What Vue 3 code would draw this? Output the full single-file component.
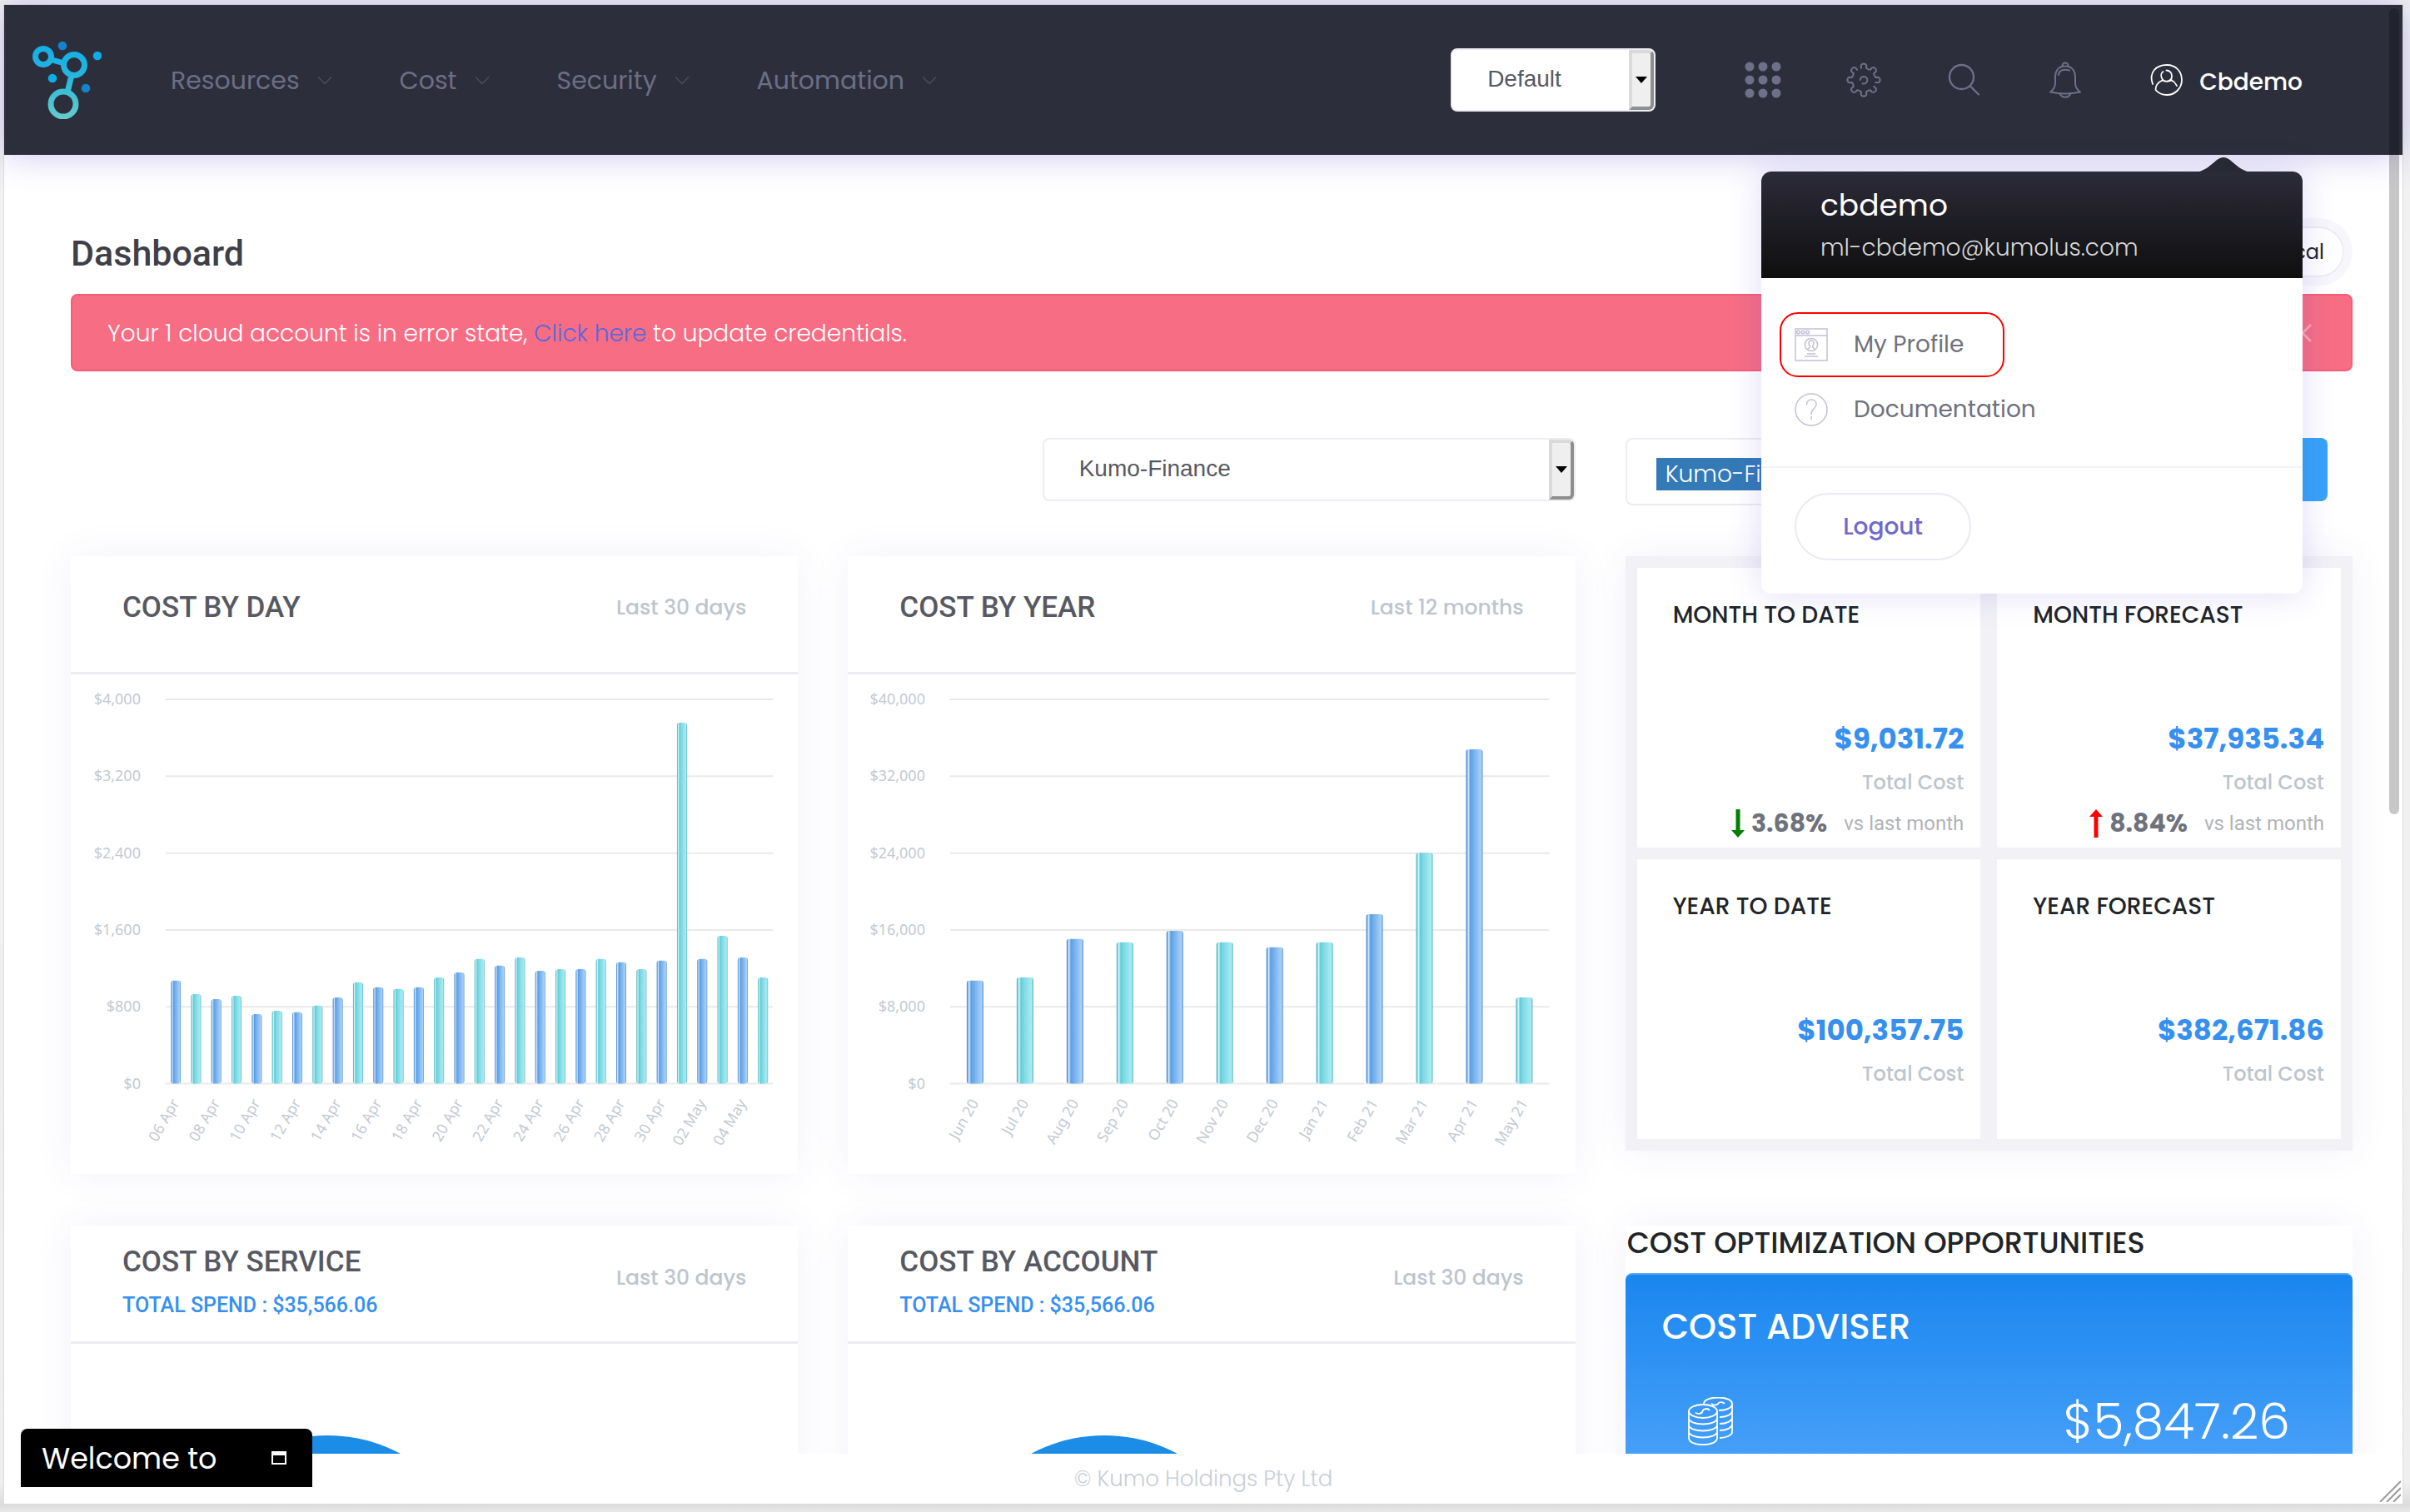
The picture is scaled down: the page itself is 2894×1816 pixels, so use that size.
<script setup>
const navItems = ['Resources', 'Cost', 'Security', 'Automation']

const PLOT_TOP = 30
const PLOT_BASE = 492
const PLOT_HEIGHT = PLOT_BASE - PLOT_TOP

function toothed(from, to) {
  const point = (r, deg) => {
    const a = (deg * Math.PI) / 180
    return `${(22 + r * Math.cos(a)).toFixed(2)} ${(22 + r * Math.sin(a)).toFixed(2)}`
  }
  let d = ''
  for (let deg = from; deg <= to; deg += 45) {
    d += deg === from ? `M${point(14.5, deg - 12)}` : `Q${point(13.4, deg - 22.5)} ${point(14.5, deg - 12)}`
    d += `L${point(17.6, deg - 11)}A3.6 3.6 0 0 1 ${point(17.6, deg + 11)}L${point(14.5, deg + 12)}`
  }
  return d
}
const gearPath = toothed(-90, 0) + toothed(45, 225)

function buildChart({ title, period, left, right, max, barWidth, labels, values, ticks }) {
  const step = (right - left) / values.length
  const bars = values.map((value, i) => {
    const height = (value / max) * PLOT_HEIGHT
    return {
      x: left + step * (i + 0.5) - barWidth / 2,
      y: PLOT_BASE - height,
      height,
      fill: i % 2 ? 'url(#barTeal)' : 'url(#barBlue)',
    }
  })
  const every = Math.floor(values.length / labels.length)
  const xLabels = labels.map((text, i) => ({ text, x: left + step * (i * every + 0.5) + 5 }))
  const grid = ticks.map((text, i) => ({ text, y: PLOT_TOP + (PLOT_HEIGHT / (ticks.length - 1)) * i }))
  return { title, period, left, right, barWidth, bars, xLabels, grid }
}

const charts = [
  buildChart({
    title: 'COST BY DAY',
    period: 'Last 30 days',
    left: 114,
    right: 844,
    max: 4000,
    barWidth: 12,
    ticks: ['$4,000', '$3,200', '$2,400', '$1,600', '$800', '$0'],
    labels: ['06 Apr', '08 Apr', '10 Apr', '12 Apr', '14 Apr', '16 Apr', '18 Apr', '20 Apr', '22 Apr', '24 Apr', '26 Apr', '28 Apr', '30 Apr', '02 May', '04 May'],
    values: [1074, 933, 880, 915, 725, 760, 743, 813, 897, 1056, 1003, 986, 1003, 1105, 1158, 1299, 1229, 1313, 1176, 1193, 1193, 1299, 1264, 1193, 1282, 3757, 1299, 1538, 1313, 1105],
  }),
  buildChart({
    title: 'COST BY YEAR',
    period: 'Last 12 months',
    left: 123,
    right: 843,
    max: 40000,
    barWidth: 20,
    ticks: ['$40,000', '$32,000', '$24,000', '$16,000', '$8,000', '$0'],
    labels: ['Jun 20', 'Jul 20', 'Aug 20', 'Sep 20', 'Oct 20', 'Nov 20', 'Dec 20', 'Jan 21', 'Feb 21', 'Mar 21', 'Apr 21', 'May 21'],
    values: [10740, 11050, 15070, 14720, 15910, 14720, 14190, 14720, 17640, 24040, 34790, 8970],
  }),
]

const totals = [
  { title: 'MONTH TO DATE', amount: '$9,031.72', change: '3.68%', down: true },
  { title: 'MONTH FORECAST', amount: '$37,935.34', change: '8.84%', down: false },
  { title: 'YEAR TO DATE', amount: '$100,357.75' },
  { title: 'YEAR FORECAST', amount: '$382,671.86' },
]

const breakdowns = ['COST BY SERVICE', 'COST BY ACCOUNT']
</script>

<template>
  <div class="window">
    <div class="app">
      <header class="topbar">
        <a class="logo" href="#" aria-label="Home">
          <svg width="84" height="96" viewBox="0 0 84 96">
            <defs>
              <linearGradient id="logoFill" x1="0" y1="8" x2="0" y2="96" gradientUnits="userSpaceOnUse">
                <stop offset="0" stop-color="#14aee8" />
                <stop offset=".4" stop-color="#25b6dd" />
                <stop offset="1" stop-color="#66cbc9" />
              </linearGradient>
            </defs>
            <g fill="none" stroke="url(#logoFill)" stroke-width="7">
              <circle cx="14" cy="21" r="9.5" />
              <circle cx="51" cy="31" r="12.5" />
              <circle cx="38" cy="78" r="15" />
              <path d="M23 24.500L39 29M48 43L43 64" />
            </g>
            <circle cx="37" cy="8" r="5.300" fill="#1583c9" />
            <circle cx="79" cy="20" r="5.300" fill="#0caee3" />
            <circle cx="25" cy="47" r="5.300" fill="#0caee3" />
            <circle cx="65" cy="59" r="5.300" fill="#1583c9" />
          </svg>
        </a>
        <nav class="nav">
          <a v-for="item in navItems" :key="item" href="#">
            {{ item }}
            <svg width="20" height="12" viewBox="0 0 20 12"><path d="M2 1.500L10 9.500L18 1.500" fill="none" stroke="#4c4e62" stroke-width="1.500" /></svg>
          </a>
        </nav>
        <div class="picker scope">
          <select aria-label="Scope"><option>Default</option></select>
        </div>
        <div class="tools">
          <button type="button" aria-label="Apps">
            <svg width="44" height="44" viewBox="0 0 44 44" fill="#6e6f88">
              <template v-for="row in 3" :key="row">
                <circle v-for="col in 3" :key="col" :cx="6 + (col - 1) * 16" :cy="6 + (row - 1) * 16" r="5.500" />
              </template>
            </svg>
          </button>
          <button type="button" aria-label="Settings">
            <svg width="44" height="44" viewBox="0 0 44 44" fill="none" stroke="#6e6f88" stroke-width="2" stroke-linecap="round" stroke-linejoin="round">
              <path :d="gearPath" />
              <path d="M17.800 22A4.300 4.300 0 1 1 20.500 26.200" />
            </svg>
          </button>
          <button type="button" aria-label="Search">
            <svg width="44" height="44" viewBox="0 0 44 44" fill="none" stroke="#6e6f88" stroke-width="2.400" stroke-linecap="round">
              <circle cx="18.500" cy="18.500" r="14.500" /><path d="M29 29.500L39 39.500" />
            </svg>
          </button>
          <button type="button" aria-label="Notifications">
            <svg width="44" height="44" viewBox="0 0 44 44" fill="none" stroke="#6e6f88" stroke-width="2" stroke-linejoin="round" stroke-linecap="round">
              <path d="M22 5.500C13 5.500 10 12 10 18V26C10 31 7.500 34 4 36.500C15 39 29 39 40 36.500C36.500 34 34 31 34 26V18C34 12 31 5.500 22 5.500Z" />
              <path d="M18.500 5.500C18.500 0 25.500 0 25.500 5.500M15.500 38.500C18 44 26 44 28.500 38.500M14 16C14.500 11 18 8.500 27 10.500" />
            </svg>
          </button>
          <div class="account">
            <button type="button" class="account-toggle" aria-expanded="true">
              <svg width="44" height="44" viewBox="0 0 44 44" fill="none" stroke="#fff" stroke-width="1.800" stroke-linecap="round">
                <path d="M6 27C1 13 10 4 23 4C34 4 41 12 41 22C41 32 33 40 23 40C16 40 12 37 9.500 34C9.500 29 12 25 17.500 22.500M29 22.500C32 24 34 27 35 29" />
                <path d="M22.500 10.500A6.500 6.500 0 0 1 29 17A6.300 6.300 0 0 1 17 20C15 16 17 13 18.500 12M17.500 22.500Q23 25 29 22.500" />
              </svg>
              <span>Cbdemo</span>
            </button>
            <div class="menu">
              <svg class="menu-tip" width="68" height="18" viewBox="0 0 68 18"><path d="M0 18C18 16 24 0 34 0C44 0 50 16 68 18Z" fill="#272935" /></svg>
              <div class="menu-head">
                <div class="menu-name">cbdemo</div>
                <div class="menu-mail">ml-cbdemo@kumolus.com</div>
              </div>
              <div class="menu-links">
                <a href="#" class="current">
                  <svg width="40" height="40" viewBox="0 0 40 40" fill="none" stroke="#c3c1d6" stroke-width="1.500">
                    <path d="M1 1H39V39H1ZM1 9H39" />
                    <circle cx="4.500" cy="5" r="1.800" /><circle cx="10" cy="5" r="1.800" /><circle cx="15.500" cy="5" r="1.800" />
                    <circle cx="20" cy="20" r="7.600" />
                    <path d="M15.500 26C16 24 18.500 24 18.500 22C15.500 19 17 15 20 15C23 15 24.500 19 21.500 22C21.500 24 24 24 24.500 26M15 31H25M12 34H28" />
                  </svg>
                  My Profile
                </a>
                <a href="#">
                  <svg width="40" height="40" viewBox="0 0 40 40" fill="none" stroke="#c3c1d6" stroke-width="1.500">
                    <circle cx="20" cy="20" r="19" />
                    <path d="M14.500 14C14.500 6 26 6 26 13.500C26 19 20 18 20 25.500M20 28.500V31.500" stroke-linecap="round" />
                  </svg>
                  Documentation
                </a>
              </div>
              <div class="menu-foot"><button type="button">Logout</button></div>
            </div>
          </div>
        </div>
      </header>

      <main class="content">
        <div class="title-row">
          <h1>Dashboard</h1>
          <button type="button" class="view-pill">Technical</button>
        </div>

        <div class="alert" role="alert">
          <p>Your 1 cloud account is in error state, <a href="#">Click here</a> to update credentials.</p>
          <button type="button" aria-label="Dismiss">
            <svg width="22" height="22" viewBox="0 0 22 22"><path d="M1 1L21 21M21 1L1 21" stroke="#fba9b6" stroke-width="2.500" /></svg>
          </button>
        </div>

        <div class="filters">
          <div class="picker tenant">
            <select aria-label="Tenant"><option>Kumo-Finance</option></select>
          </div>
          <div class="tag-filter">
            <div class="tag-box"><span class="tag">Kumo-Finance</span></div>
            <button type="button" aria-label="Apply filter"></button>
          </div>
        </div>

        <div class="board">
          <section v-for="chart in charts" :key="chart.title" class="card">
            <div class="card-head">
              <h2>{{ chart.title }}</h2>
              <span class="period">{{ chart.period }}</span>
            </div>
            <svg class="chart" viewBox="0 0 874 600" role="img" :aria-label="chart.title">
              <defs>
                <linearGradient id="barBlue">
                  <stop offset="0" stop-color="#4a86c9" /><stop offset=".07" stop-color="#6fa9e4" />
                  <stop offset=".14" stop-color="#d8e9fb" /><stop offset=".26" stop-color="#5c9fe0" />
                  <stop offset=".4" stop-color="#6dabea" /><stop offset=".9" stop-color="#a8d1fb" />
                  <stop offset="1" stop-color="#4a86c9" />
                </linearGradient>
                <linearGradient id="barTeal">
                  <stop offset="0" stop-color="#49adba" /><stop offset=".07" stop-color="#77cfd8" />
                  <stop offset=".14" stop-color="#d5f5f7" /><stop offset=".26" stop-color="#5fcbd7" />
                  <stop offset=".4" stop-color="#7ad8e2" /><stop offset=".9" stop-color="#a9ebf4" />
                  <stop offset="1" stop-color="#49adba" />
                </linearGradient>
              </defs>
              <g v-for="line in chart.grid" :key="line.text">
                <line :x1="chart.left" :x2="chart.right" :y1="line.y" :y2="line.y" stroke="#e9e9eb" stroke-width="2" />
                <text :x="chart.left - 30" :y="line.y + 6" text-anchor="end">{{ line.text }}</text>
              </g>
              <rect v-for="(bar, i) in chart.bars" :key="i" :x="bar.x" :y="bar.y" :width="chart.barWidth" :height="bar.height" rx="3" :fill="bar.fill" />
              <text v-for="label in chart.xLabels" :key="label.text" text-anchor="end" :transform="`translate(${label.x} 515) rotate(-60)`">{{ label.text }}</text>
            </svg>
          </section>

          <section class="totals">
            <div v-for="item in totals" :key="item.title" class="total">
              <h3>{{ item.title }}</h3>
              <div class="amount">{{ item.amount }}</div>
              <div class="caption">Total Cost</div>
              <div v-if="item.change" class="trend">
                <svg width="16" height="34" viewBox="0 0 16 34">
                  <path v-if="item.down" d="M5.500 0H10.500V25H16L8 34L0 25H5.500Z" fill="#008200" />
                  <path v-else d="M5.500 34H10.500V9H16L8 0L0 9H5.500Z" fill="#f00" />
                </svg>
                <strong>{{ item.change }}</strong>
                <span>vs last month</span>
              </div>
            </div>
          </section>

          <section v-for="name in breakdowns" :key="name" class="card">
            <div class="card-head with-total">
              <div>
                <h2>{{ name }}</h2>
                <div class="spend">TOTAL SPEND : $35,566.06</div>
              </div>
              <span class="period">Last 30 days</span>
            </div>
            <div class="pie-area"><div class="pie"></div></div>
          </section>

          <section class="advice">
            <h2>COST OPTIMIZATION OPPORTUNITIES</h2>
            <div class="adviser">
              <h3>COST ADVISER</h3>
              <div class="adviser-row">
                <svg width="54" height="58" viewBox="0 0 54 58" fill="none" stroke="#fff" stroke-width="1.800">
                  <ellipse cx="18" cy="17" rx="17" ry="8" />
                  <path d="M1 17V49C1 60 35 60 35 49V17M1 25C1 35 35 35 35 25M1 33C1 43 35 43 35 33M1 41C1 51 35 51 35 41M19 8C19 -2 53 -2 53 8V42C53 46 45 49 38 49" />
                  <path d="M53 8C53 13 46 16 37 16M53 16C53 21 46 24 38 24M53 24C53 29 46 32 38 32M53 32C53 37 46 40 38 40" />
                  <path d="M9 18.500C11 21 17 20 17.500 17C18 13.500 24 13 26 16M28 7.500C30 10.500 35 10 36 8C37 5.500 42 5.500 44 8" />
                </svg>
                <span>$5,847.26</span>
              </div>
            </div>
          </section>
        </div>
      </main>

      <footer class="footer">© Kumo Holdings Pty Ltd</footer>

      <div class="welcome">
        <span>Welcome to</span>
        <button type="button" aria-label="Expand">
          <svg width="18" height="16" viewBox="0 0 18 16"><path d="M1 2H17V15H1Z" fill="none" stroke="#fff" stroke-width="2" /><path d="M0 0H18V5H0Z" fill="#fff" /></svg>
        </button>
      </div>
      <div class="scroll-thumb"></div>
      <svg class="grip" width="26" height="26" viewBox="0 0 26 26"><path d="M1 26L26 1M9 26L26 9M17 26L26 17" stroke="#9a9a9a" stroke-width="2" /></svg>
    </div>
  </div>
</template>

<style>
body {
  margin: 0;
}
</style>

<style scoped>
*,
*::before,
*::after {
  box-sizing: border-box;
}
.window {
  height: 100vh;
  padding: 6px 9px 10px 5px;
  background: linear-gradient(#f1f1f1, #efefef 98%, #dcdcdc 99.5%, #e8e8e8);
  font-family: Poppins, Inter, 'Open Sans', sans-serif;
  font-size: 28px;
  color: #212529;
}
.app {
  position: relative;
  display: flex;
  flex-direction: column;
  height: 100%;
  background: #fff;
  box-shadow: 0 0 0 1px #dcdedd;
}
h1,
h2,
h3,
p {
  margin: 0;
}
button {
  padding: 0;
  border: 0;
  background: none;
  font: inherit;
  color: inherit;
}
a {
  color: inherit;
  text-decoration: none;
}
svg {
  display: block;
  flex: none;
}

.topbar {
  position: relative;
  z-index: 2;
  display: flex;
  align-items: center;
  height: 180px;
  padding: 0 120px 0 33px;
  background: #2c2e3b;
  box-shadow: 0 0 40px rgba(82, 63, 205, 0.3);
}
.logo {
  margin-right: 83px;
  padding-bottom: 3px;
}
.nav {
  display: flex;
  gap: 80px;
  padding-top: 2px;
  color: #6c6e86;
  font-size: 30px;
}
.nav a {
  display: flex;
  align-items: center;
  gap: 20px;
}
.picker {
  position: relative;
}
.picker select {
  display: block;
  width: 100%;
  height: 76px;
  padding: 0 42px 4px;
  border: 2px solid #ebedf2;
  border-radius: 8px;
  background: #fff;
  appearance: none;
  font-family: 'Liberation Sans', Arial, sans-serif;
  font-size: 28px;
  color: #575962;
}
.picker::before {
  content: '';
  position: absolute;
  top: 2px;
  right: 2px;
  width: 30px;
  height: 72px;
  border: 4px solid;
  border-color: #dadada #8e8e8e #8e8e8e #dadada;
  border-radius: 0 6px 6px 0;
  background: #efefef;
  pointer-events: none;
}
.picker::after {
  content: '';
  position: absolute;
  top: 34px;
  right: 10px;
  border: 7px solid transparent;
  border-top: 8px solid #000;
  border-bottom: 0;
  pointer-events: none;
}
.scope {
  width: 246px;
  margin: 0 107px 0 auto;
}
.tools {
  display: flex;
  align-items: center;
  gap: 77px;
}
.account {
  position: relative;
}
.account-toggle {
  display: flex;
  align-items: center;
  gap: 18px;
  height: 180px;
  color: #fff;
  font-weight: 500;
}
.account-toggle span {
  padding-top: 6px;
}
.menu {
  position: absolute;
  top: 200px;
  right: 0;
  width: 650px;
  border-radius: 12px;
  background: #fff;
  box-shadow: 0 0 40px rgba(82, 63, 205, 0.18);
}
.menu-tip {
  position: absolute;
  top: -17px;
  right: 61px;
}
.menu-head {
  height: 128px;
  padding: 16px 71px;
  border-radius: 12px 12px 0 0;
  background: linear-gradient(#2c2b39, #0f0f0f);
  color: #fff;
}
.menu-name {
  font-size: 36px;
  line-height: 50px;
}
.menu-mail {
  color: #d6d6d8;
  font-weight: 300;
  line-height: 52px;
}
.menu-links {
  padding: 41px 22px 29px;
  border-bottom: 2px solid #f1f1f7;
  color: #6f727d;
}
.menu-links a {
  display: flex;
  align-items: center;
  gap: 31px;
  width: 270px;
  height: 78px;
  padding-left: 18px;
}
.menu-links .current {
  outline: 2px solid #f00;
  outline-offset: -2px;
  border-radius: 22px;
}
.menu-foot {
  padding: 30px 40px 40px;
}
.menu-foot button {
  display: block;
  width: 212px;
  height: 81px;
  border: 2px solid #ebe9f2;
  border-radius: 41px;
  color: #716aca;
  font-weight: 500;
}

.content {
  flex: 1;
  min-height: 0;
  overflow: hidden;
  padding: 86px 60px 0 80px;
}
.title-row {
  display: flex;
  justify-content: space-between;
  align-items: flex-start;
  height: 61px;
  padding-right: 10px;
}
h1 {
  color: #3f4047;
  font-family: Roboto, sans-serif;
  font-size: 43px;
  font-weight: 500;
  line-height: 64px;
}
.view-pill {
  height: 61px;
  padding: 0 22px;
  border: 2px solid #ebedf2;
  border-radius: 31px;
  box-shadow: 0 0 0 10px #f7f7fb;
  font-size: 24px;
}
.alert {
  display: flex;
  justify-content: space-between;
  align-items: center;
  height: 93px;
  margin-top: 20px;
  padding: 0 47px 0 42px;
  border: 2px solid #f85c76;
  border-radius: 8px;
  background: #f76e84;
  color: #fff;
  font-weight: 300;
}
.alert p {
  padding-top: 2px;
}
.alert a {
  color: #5867dd;
}
.filters {
  display: grid;
  grid-template-columns: repeat(3, minmax(0, 1fr));
  column-gap: 60px;
  align-items: start;
  margin: 80px 0 61px;
}
.tenant {
  grid-column: 2;
  justify-self: end;
  width: 640px;
}
.tag-filter {
  display: flex;
  align-items: flex-start;
  padding-right: 30px;
}
.tag-box {
  flex: 1;
  height: 81px;
  padding: 21px 35px;
  border: 2px solid #ebedf2;
  border-right: 0;
  border-radius: 8px 0 0 8px;
}
.tag {
  display: inline-block;
  padding: 0 11px;
  background: #337ab7;
  color: #fff;
  font-weight: 300;
  line-height: 39px;
}
.tag-filter button {
  width: 120px;
  height: 76px;
  border-radius: 0 8px 8px 0;
  background: #36a3f7;
}

.board {
  display: grid;
  grid-template-columns: repeat(3, minmax(0, 1fr));
  gap: 62px 60px;
  align-items: start;
}
.card,
.totals,
.advice {
  background: #fff;
  box-shadow: 0 0 44px rgba(69, 65, 178, 0.07);
}
.card-head {
  display: flex;
  justify-content: space-between;
  height: 142px;
  padding: 38px 62px 0;
  border-bottom: 3px solid #ebedf2;
}
.card-head h2 {
  color: #575962;
  font-family: Roboto, sans-serif;
  font-size: 35px;
  font-weight: 500;
  line-height: 48px;
}
.period {
  color: #bcc5ce;
  font-size: 25px;
  font-weight: 500;
  line-height: 48px;
}
.with-total {
  padding-top: 20px;
}
.with-total .period {
  line-height: 86px;
}
.spend {
  margin-top: 10px;
  color: #3690f0;
  font-family: Roboto, sans-serif;
  font-size: 25px;
  font-weight: 500;
  line-height: 36px;
}
.chart {
  width: 100%;
  height: auto;
}
.chart text {
  fill: #c3cad2;
  font-family: 'Noto Sans', sans-serif;
  font-size: 18px;
}
.pie-area {
  padding: 110px 121px;
}
.pie {
  width: 374px;
  height: 374px;
  border-radius: 50%;
  background: #1c8de6;
}

.totals {
  display: grid;
  grid-template-columns: repeat(2, minmax(0, 1fr));
  gap: 14px 20px;
  padding: 14px;
  background: #f1f1f6;
}
.total {
  min-height: 336px;
  padding: 37px 20px 0 43px;
  background: #fff;
  text-align: right;
}
.total h3 {
  font-size: 28px;
  font-weight: 500;
  line-height: 40px;
  text-align: left;
}
.amount {
  margin-top: 106px;
  color: #3690f0;
  font-size: 34px;
  font-weight: 700;
  line-height: 44px;
}
.caption {
  margin-top: 13px;
  color: #bcc5ce;
  font-size: 24px;
  font-weight: 500;
  line-height: 36px;
}
.trend {
  display: flex;
  justify-content: flex-end;
  align-items: center;
  margin-top: 9px;
  line-height: 44px;
}
.trend strong {
  margin: 0 20px 0 8px;
  color: #6f727d;
  font-size: 30px;
}
.trend span {
  color: #b1b3b8;
  font-family: Roboto, sans-serif;
  font-size: 24px;
}
.advice h2 {
  padding: 0 2px 15px;
  font-size: 35px;
  font-weight: 500;
  line-height: 42px;
}
.adviser {
  min-height: 340px;
  padding: 35px 75px 0 44px;
  border-top: 2px solid #58a9f8;
  border-radius: 8px;
  background: linear-gradient(#1a86ef, #459ff8 215px);
  color: #fff;
}
.adviser h3 {
  font-size: 42px;
  font-weight: 500;
  line-height: 56px;
}
.adviser-row {
  display: flex;
  justify-content: space-between;
  align-items: center;
  margin-top: 47px;
  padding-left: 31px;
  font-size: 60px;
  font-weight: 300;
  line-height: 76px;
}

.footer {
  height: 60px;
  background: #fff;
  color: #c9ced6;
  font-size: 26px;
  font-weight: 300;
  line-height: 60px;
  text-align: center;
}
.welcome {
  position: absolute;
  bottom: 20px;
  left: 20px;
  display: flex;
  justify-content: space-between;
  align-items: center;
  width: 350px;
  height: 70px;
  padding: 0 31px 0 25px;
  border-radius: 8px 8px 0 0;
  background: #000;
  color: #fff;
  font-size: 35px;
}
.scroll-thumb {
  position: absolute;
  z-index: 3;
  top: 4px;
  right: 4px;
  width: 12px;
  height: 968px;
  border-radius: 6px;
  background: rgba(0, 0, 0, 0.22);
}
.grip {
  position: absolute;
  right: 2px;
  bottom: 2px;
}
</style>
